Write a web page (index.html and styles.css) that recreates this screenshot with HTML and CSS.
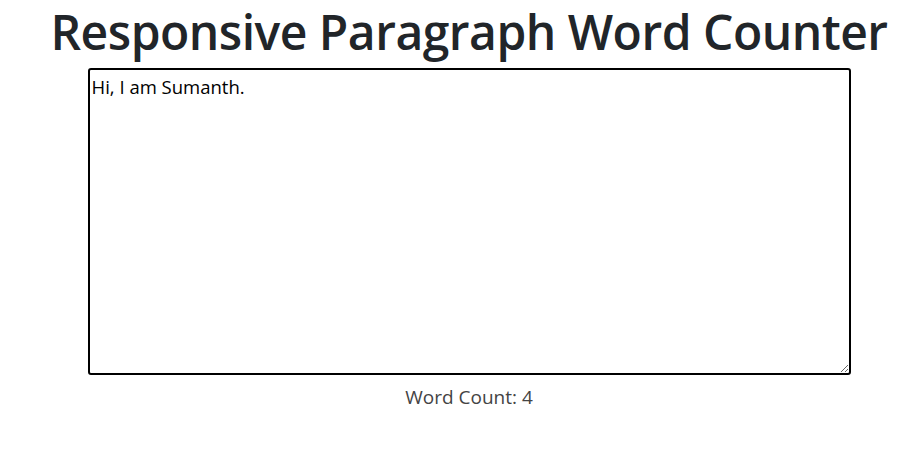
FILE: index.html
```html
<!DOCTYPE html>
<html lang="en">
<head>
    <meta charset="UTF-8">
    <meta name="viewport" content="width=device-width, initial-scale=1.0">
    <title>Responsive Paragraph Word Counter</title>
    <link rel="stylesheet" href="styles.css">
</head>
<body>
    <div class="container">
        <h1 class="title">Responsive Paragraph Word Counter</h1>
        <textarea id="paragraph" class="paragraph">Hi, I am Sumanth.</textarea>
        <p class="count">Word Count: <span id="count">4</span></p>
    </div>

    <script>
        const paragraph = document.getElementById('paragraph');
        const count = document.getElementById('count');

        // Compter les mots à chaque saisie
        paragraph.addEventListener('input', () => {
            const words = paragraph.value.trim().split(/\s+/).filter(w => w.length > 0);
            count.textContent = words.length;
        });
    </script>
</body>
</html>
```

FILE: styles.css
```css
body {
    font-family: "Open Sans", "Noto Sans", Arial, sans-serif;
    margin: 0;
    padding: 0;
    background-color: #fff;
    color: #212529;
}
.container {
    display: flex;
    flex-direction: column;
    align-items: center;
    padding-left: 16px;
}
.title {
    margin: 0;
    font-size: 48px;
    font-weight: 600;
    line-height: 64px;
    letter-spacing: -0.5px;
}
.paragraph {
    box-sizing: border-box;
    width: 763px;
    height: 307px;
    margin-top: 4px;
    padding: 4px 2px 1px;
    border: 2px solid #000;
    border-radius: 3px;
    font-family: "Open Sans", "Noto Sans", Arial, sans-serif;
    font-size: 18.5px;
    line-height: 1.4;
    color: #000;
    outline: none;
}
.count {
    margin: 9px 0 0;
    font-size: 19px;
    color: #444;
}
```
